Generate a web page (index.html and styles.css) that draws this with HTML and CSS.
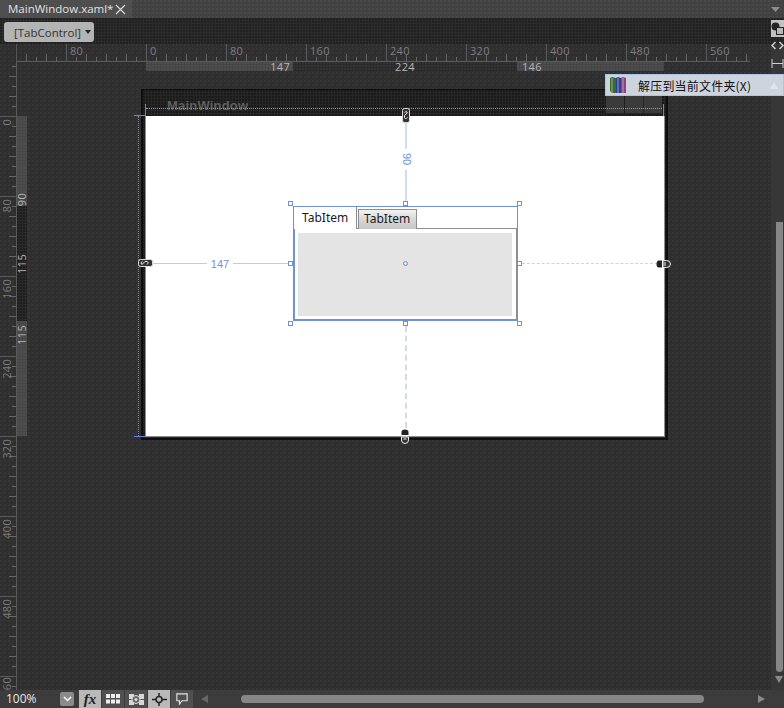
FILE: index.html
```html
<!DOCTYPE html>
<html lang="en">
  <head>
    <meta charset="UTF-8" />
    <title>MainWindow.xaml - Designer</title>
    <link rel="stylesheet" href="styles.css">
  </head>
  <body>
    <div class="app">
      <!-- document tabs -->
      <div class="tabbar">
        <div class="doc-tab">
          <span>MainWindow.xaml*</span>
          <svg class="doc-close" width="11" height="11" viewBox="0 0 11 11"><path d="M1 1l9 9M10 1l-9 9" stroke="#d8d8d8" stroke-width="1.2" fill="none"/></svg>
        </div>
        <svg class="tab-menu" width="9" height="5" viewBox="0 0 9 5"><path d="M0 0h9L4.500 5z" fill="#8c8c8c"/></svg>
      </div>

      <!-- breadcrumb -->
      <div class="crumbbar">
        <button class="crumb">[TabControl]<i class="crumb-arrow"></i></button>
        <div class="split-toggle">
          <svg width="13" height="13" viewBox="0 0 13 13"><circle cx="4.500" cy="4.500" r="4" fill="#222"/><rect x="5.500" y="5.500" width="7" height="7" fill="#b8b8b8" stroke="#222"/></svg>
        </div>
      </div>

      <div class="workspace">
        <div class="surface">
          <div class="ruler-top">
            <div class="ruler-top-track">
              <div class="hmark"></div>
              <div class="hmark"><span>80</span></div>
              <div class="hmark"><span>0</span></div>
              <div class="hmark"><span>80</span></div>
              <div class="hmark"><span>160</span></div>
              <div class="hmark"><span>240</span></div>
              <div class="hmark"><span>320</span></div>
              <div class="hmark"><span>400</span></div>
              <div class="hmark"><span>480</span></div>
              <div class="hmark"><span>560</span></div>
            </div>
          </div>

          <div class="ruler-left">
            <div class="ruler-left-track">
              <div class="vmark"></div>
              <div class="vmark"><span>0</span></div>
              <div class="vmark"><span>80</span></div>
              <div class="vmark"><span>160</span></div>
              <div class="vmark"><span>240</span></div>
              <div class="vmark"><span>320</span></div>
              <div class="vmark"><span>400</span></div>
              <div class="vmark"><span>480</span></div>
              <div class="vmark"><span>60</span></div>
            </div>
          </div>

          <div class="strip-left">
            <div class="vseg vseg-lit vseg-end"><span>90</span></div>
            <div class="vseg vseg-mid"><span>115</span></div>
            <div class="vseg vseg-lit vseg-start"><span>115</span></div>
          </div>

          <div class="strip-top">
            <div class="hseg hseg-lit hseg-end">147</div>
            <div class="hseg hseg-mid">224</div>
            <div class="hseg hseg-lit hseg-start">146</div>
          </div>

          <!-- design canvas -->
          <div class="canvas">
            <div class="window">
              <div class="win-head">
                <span class="win-title">MainWindow</span>
                <div class="win-btns"><i></i><i></i><i></i></div>
              </div>
              <i class="win-dotline"></i>
              <div class="win-content">
                <i class="tick tick-top-l"></i>
                <i class="tick tick-top-r"></i>
                <i class="tick tick-cross"></i>
                <i class="tick tick-side"></i>
                <i class="tick tick-foot"></i>

                <div class="guide guide-top"><span>90</span></div>
                <div class="guide guide-left"><span>147</span></div>
                <i class="guide guide-right"></i>
                <i class="guide guide-bottom"></i>

                <svg class="pin pin-top" width="8" height="15" viewBox="0 0 8 15"><rect x=".5" y=".5" width="7" height="14" rx="2" fill="#333" stroke="#ddd"/><path d="M2.500 4.500q1.500-2 3 0l-3 3q-.5 3 1 3t2-1" fill="none" stroke="#eee"/></svg>
                <svg class="pin pin-left" width="15" height="8" viewBox="0 0 15 8"><rect x=".5" y=".5" width="14" height="7" rx="2" fill="#333" stroke="#ddd"/><path d="M4 2.500q-2 1.500 0 3l3-3q3-.5 3 1t-1 2" fill="none" stroke="#eee"/></svg>
                <svg class="pin pin-right" width="15" height="8" viewBox="0 0 15 8"><path d="M5 .5H3Q.5.5.500 4T3 7.500h3V.5z" fill="#222"/><path d="M7.500.5h3q4 0 4 3.500t-4 3.500h-3" fill="#333" stroke="#eee"/><path d="M9 2v4" stroke="#eee"/></svg>
                <svg class="pin pin-bottom" width="8" height="15" viewBox="0 0 8 15"><path d="M.5 6V3Q.5.500 4 .5T7.500 3v3z" fill="#222"/><path d="M.5 8h7v3q0 3.500-3.500 3.500T.5 11z" fill="#333" stroke="#eee"/><path d="M2.500 10h3" stroke="#eee"/></svg>

                <div class="tabctl">
                  <div class="tabstrip">
                    <div class="tabitem tabitem-on">TabItem</div>
                    <div class="tabitem">TabItem</div>
                  </div>
                  <div class="tabpanel">
                    <div class="tabfill"></div>
                  </div>
                  <i class="tabcenter"></i>
                  <i class="handle h-tl"></i>
                  <i class="handle h-tm"></i>
                  <i class="handle h-tr"></i>
                  <i class="handle h-ml"></i>
                  <i class="handle h-mr"></i>
                  <i class="handle h-bl"></i>
                  <i class="handle h-bm"></i>
                  <i class="handle h-br"></i>
                </div>
              </div>
            </div>
          </div>
        </div>

        <!-- right column -->
        <div class="vscroll">
          <svg class="side-icon side-first" width="13" height="9" viewBox="0 0 13 9"><path d="M4.500 1L1 4.500 4.500 8M8.500 1L12 4.500 8.500 8" fill="none" stroke="#cfcfcf" stroke-width="1.500"/></svg>
          <svg class="side-icon" width="13" height="9" viewBox="0 0 13 9"><path d="M1 0v9M12 0v9M1 4.500h11" fill="none" stroke="#cfcfcf"/></svg>
          <div class="vthumb"></div>
          <svg class="varrow" width="8" height="7" viewBox="0 0 8 7"><path d="M0 0h8L4 7z" fill="#8a8a8a"/></svg>
        </div>
      </div>

      <!-- bottom bar -->
      <div class="statusbar">
        <div class="zoom-val">100%</div>
        <div class="zoom-drop">
          <svg width="9" height="6" viewBox="0 0 9 6"><path d="M1 1l3.500 3.500L8 1" fill="none" stroke="#fff" stroke-width="1.500"/></svg>
        </div>
        <div class="tools">
          <div class="tool tool-on"><span class="fx">fx</span></div>
          <div class="tool">
            <svg width="14" height="10" viewBox="0 0 14 10"><path d="M0 0h4v4H0zM5 0h4v4H5zM10 0h4v4h-4zM0 5.500h4v4H0zM5 5.500h4v4H5zM10 5.500h4v4h-4z" fill="#eee"/></svg>
          </div>
          <div class="tool">
            <svg width="15" height="11" viewBox="0 0 15 11"><path d="M0 0h5v5H0zM10 0h5v5h-5zM0 6h5v5H0zM10 6h5v5h-5z" fill="#d8d8d8"/><circle cx="7" cy="5.500" r="4" fill="#666" stroke="#ddd"/><circle cx="7" cy="5.500" r="1.500" fill="#ddd"/></svg>
          </div>
          <div class="tool tool-on">
            <svg width="15" height="13" viewBox="0 0 15 13"><path d="M0 6.500h15M7 0v13" stroke="#222" stroke-width="1.500"/><circle cx="7" cy="6.500" r="3" fill="#b9b9b9" stroke="#222" stroke-width="1.500"/></svg>
          </div>
          <div class="tool">
            <svg width="12" height="12" viewBox="0 0 14 14"><path d="M1 1h12v8H7l-3 4V9H1z" fill="none" stroke="#e4e4e4" stroke-width="1.300"/></svg>
          </div>
        </div>
        <div class="hscroll">
          <svg width="7" height="8" viewBox="0 0 7 8"><path d="M7 0v8L0 4z" fill="#666"/></svg>
          <div class="hthumb"></div>
          <svg width="7" height="8" viewBox="0 0 7 8"><path d="M0 0v8l7-4z" fill="#8a8a8a"/></svg>
        </div>
      </div>

      <!-- shell menu from another program, floats over the designer -->
      <div class="shell-item">
        <svg class="books" width="18" height="18" viewBox="0 0 18 18">
          <path d="M1 2l2-1 4 1v15l-4 0-2-2z" fill="#3d6a2b"/>
          <path d="M7 2l2-1 3 1v15H7z" fill="#2d3f92"/>
          <path d="M12 2l2-1 3 1v15h-5z" fill="#93407f"/>
          <path d="M3 2v15M9 2v15M14 2v15" stroke="#d9dde2" stroke-width=".6"/>
        </svg>
        <span>解压到当前文件夹(X)</span>
        <svg class="shell-ghost" width="8" height="7" viewBox="0 0 8 7"><path d="M4 0l4 7H0z" fill="#dfe4ea"/></svg>
      </div>
    </div>
  </body>
</html>
```

FILE: styles.css
```css
* {
  box-sizing: border-box;
}

body {
  margin: 0;
  background: #2f2f2f;
}

i {
  display: block;
}

.app {
  position: relative;
  width: 784px;
  height: 708px;
  overflow: hidden;
  display: grid;
  grid-template-rows: 18px 26px 1fr 18px;
  font-family: "Open Sans", "Noto Sans", sans-serif;
  font-size: 12px;
  color: #ddd;
  background-color: #2f2f2f;
  background-image:
    radial-gradient(circle at 1px 1px, #353535 1px, transparent 1px),
    radial-gradient(circle at 4px 4px, #353535 1.5px, transparent 1.5px);
  background-size: 4px 4px, 8px 8px;
}

/* Document tabs */
.tabbar {
  display: flex;
  align-items: center;
  justify-content: space-between;
  padding-right: 2px;
  background-color: #414141;
  background-image: radial-gradient(circle at 1px 1px, #484848 1px, transparent 1px);
  background-size: 4px 4px;
}

.doc-tab {
  width: 132px;
  height: 18px;
  display: flex;
  align-items: center;
  justify-content: space-between;
  padding: 0 6px 0 8px;
  font-size: 11.5px;
  line-height: 18px;
  color: #e2e2e2;
  background: #4e4e4e;
}

.doc-close {
  flex: none;
}

.tab-menu {
  margin-right: 2px;
}

/* Breadcrumb */
.crumbbar {
  display: flex;
  align-items: flex-start;
  justify-content: space-between;
  padding: 4px 0 0 4px;
  background-color: #2b2b2b;
  background-image: radial-gradient(circle at 1px 1px, #212121 1px, transparent 1px);
  background-size: 3px 3px;
}

.crumb {
  width: 90px;
  height: 20px;
  display: flex;
  align-items: center;
  gap: 4px;
  padding: 0 0 0 10px;
  border: 0;
  border-radius: 3px;
  font: inherit;
  font-size: 11.5px;
  color: #333;
  background: #b4b4b4;
}

.crumb-arrow {
  width: 0;
  height: 0;
  border: 3px solid transparent;
  border-top: 4px solid #222;
  border-bottom: 0;
}

.split-toggle {
  width: 13px;
  height: 17px;
  margin-top: -2px;
  display: flex;
  align-items: center;
  justify-content: center;
  background: #c2c2c2;
}

/* Design surface */
.workspace {
  display: grid;
  grid-template-columns: 1fr 13px;
  min-height: 0;
}

.surface {
  display: grid;
  grid-template-columns: 17px 10px 1fr;
  grid-template-rows: 18px 9px 1fr;
  min-height: 0;
}

.ruler-top {
  grid-column: 1 / 4;
  margin-left: 16px;
  margin-right: 21px;
  overflow: hidden;
  border-left: 1px solid #555;
  border-bottom: 1px solid #5a5a5a;
}

.ruler-top-track {
  display: flex;
  height: 100%;
  margin-left: -31px;
}

.hmark {
  flex: none;
  width: 80px;
  height: 100%;
  padding: 0 0 0 3px;
  border-left: 1px solid #5a5a5a;
  font-size: 11px;
  line-height: 13px;
  letter-spacing: 0.3px;
  color: #7d7d7d;
  background-image:
    repeating-linear-gradient(90deg, transparent 0 9px, #666 9px 10px),
    repeating-linear-gradient(90deg, transparent 0 19px, #666 19px 20px);
  background-size: 100% 4px, 100% 7px;
  background-position: bottom;
  background-repeat: no-repeat;
}

.ruler-left {
  grid-row: 2 / 4;
  overflow: hidden;
  border-right: 1px solid #5a5a5a;
}

.ruler-left-track {
  margin-top: -26px;
}

.vmark {
  height: 80px;
  padding: 2px 0 0 1px;
  border-top: 1px solid #5a5a5a;
  font-size: 11px;
  letter-spacing: 0.3px;
  color: #7d7d7d;
  background-image:
    repeating-linear-gradient(180deg, transparent 0 9px, #666 9px 10px),
    repeating-linear-gradient(180deg, transparent 0 19px, #666 19px 20px);
  background-size: 4px 100%, 7px 100%;
  background-position: right;
  background-repeat: no-repeat;
}

.vmark:last-child {
  padding-top: 0;
}

.vmark span,
.vseg span {
  display: block;
  width: 11px;
  line-height: 11px;
  writing-mode: vertical-rl;
  transform: rotate(180deg);
}

.strip-left {
  grid-column: 2;
  grid-row: 2 / 4;
  padding-top: 54px;
  font-size: 11px;
  letter-spacing: 0.3px;
  color: #b5b5b5;
}

.vseg {
  display: flex;
  flex-direction: column;
  align-items: center;
  justify-content: center;
  height: 115px;
  background-color: #2a2a2a;
  background-image: radial-gradient(circle at 1px 1px, #1d1d1d 1px, transparent 1px);
  background-size: 3px 3px;
}

.vseg span {
  width: 10px;
  line-height: 10px;
}

.vseg-lit {
  background-color: #474747;
  background-image: radial-gradient(circle at 1px 1px, #4e4e4e 1px, transparent 1px);
}

.vseg-end {
  height: 90px;
  justify-content: flex-end;
}

.vseg-start {
  justify-content: flex-start;
  padding-top: 4px;
}

.strip-top {
  grid-column: 3;
  grid-row: 2;
  display: flex;
  margin-left: 119px;
  font-size: 11px;
  line-height: 9px;
  letter-spacing: 0.3px;
  color: #b5b5b5;
}

.hseg {
  text-align: center;
  width: 224px;
  background-color: #2a2a2a;
  background-image: radial-gradient(circle at 1px 1px, #333 1px, transparent 1px);
  background-size: 3px 3px;
}

.hseg-lit {
  width: 147px;
  background-color: #464646;
  background-image: radial-gradient(circle at 1px 1px, #4e4e4e 1px, transparent 1px);
}

.hseg-end {
  padding-right: 3px;
  text-align: right;
}

.hseg-start {
  padding-left: 5px;
  text-align: left;
}

.canvas {
  grid-column: 3;
  grid-row: 3;
  position: relative;
}

/* Window being designed */
.window {
  position: absolute;
  left: 114px;
  top: 18px;
  width: 527px;
  height: 351px;
  display: flex;
  flex-direction: column;
  padding: 0 1px 1px 2px;
  border: 2px solid #0e0e0e;
  border-top-width: 1px;
  background-color: #262626;
  background-image: radial-gradient(circle at 1px 1px, #1a1a1a 1px, transparent 1px);
  background-size: 3px 3px;
}

.win-head {
  flex: none;
  height: 26px;
  display: flex;
  justify-content: space-between;
  padding: 6px 3px 0 22px;
}

.win-title {
  margin-top: 2px;
  font-family: "Liberation Sans", sans-serif;
  font-size: 13px;
  font-weight: bold;
  line-height: 15px;
  letter-spacing: 0.2px;
  color: #5f5f5f;
}

.win-btns {
  display: flex;
  gap: 1px;
}

.win-btns i {
  width: 18px;
  height: 17px;
  background: #3b3b3b;
}

.win-dotline {
  position: absolute;
  left: 3px;
  top: 18px;
  width: 518px;
  border-top: 1px dotted #7c9de6;
}

.win-content {
  position: relative;
  flex: 1;
  border: 1px solid #8c8c8c;
  border-top: 0;
  background: #fff;
}

.tick {
  position: absolute;
  background: #5f86e0;
}

.tick-top-l {
  left: -1px;
  top: -12px;
  width: 1px;
  height: 12px;
}

.tick-top-r {
  right: 0;
  top: -12px;
  width: 1px;
  height: 12px;
}

.tick-cross {
  left: -12px;
  top: -1px;
  width: 12px;
  height: 1px;
}

.tick-side {
  left: -8px;
  top: 0;
  width: 0;
  height: 320px;
  border-left: 1px dotted #5f86e0;
  background: none;
}

.tick-foot {
  left: -12px;
  top: 320px;
  width: 12px;
  height: 1px;
}

/* Margin guides */
.guide {
  position: absolute;
  font-family: "Liberation Sans", sans-serif;
  font-size: 11px;
  color: #6f90e8;
}

.guide-top {
  left: 259px;
  top: 0;
  width: 2px;
  height: 87px;
  display: flex;
  align-items: center;
  justify-content: center;
  background: #cfdcf6;
}

.guide-top span {
  flex: none;
  padding: 4px 0;
  line-height: 11px;
  writing-mode: vertical-rl;
  background: #fff;
}

.guide-left {
  left: 4px;
  top: 147px;
  width: 140px;
  height: 1px;
  display: flex;
  align-items: center;
  justify-content: center;
  background: #b8cbf0;
}

.guide-left span {
  padding: 0 4px;
  background: #fff;
}

.guide-right {
  left: 376px;
  top: 147px;
  width: 136px;
  border-top: 1px dashed #c8d4ee;
}

.guide-bottom {
  left: 259px;
  top: 210px;
  height: 102px;
  border-left: 2px dashed #d6dbea;
}

.pin {
  position: absolute;
  z-index: 2;
}

.pin-top {
  left: 256px;
  top: -8px;
}

.pin-left {
  left: -8px;
  top: 143px;
}

.pin-right {
  left: 510px;
  top: 144px;
}

.pin-bottom {
  left: 255px;
  top: 313px;
}

/* TabControl */
.tabctl {
  position: absolute;
  left: 147px;
  top: 90px;
  width: 225px;
  height: 115px;
  display: flex;
  flex-direction: column;
  border: 1px solid #6f90dc;
  background: #fff;
}

.tabstrip {
  flex: none;
  position: relative;
  z-index: 1;
  display: flex;
  align-items: flex-start;
  height: 21px;
  font-family: "Noto Sans", sans-serif;
  font-size: 12px;
  color: #1a1a1a;
}

.tabitem {
  width: 59px;
  height: 20px;
  margin-top: 2px;
  margin-left: 1px;
  padding-left: 5px;
  line-height: 17px;
  border: 1px solid #8c8e94;
  border-bottom: 0;
  background: linear-gradient(#f3f1f1, #d8d8d8 50%, #c6c6c6);
}

.tabitem-on {
  width: 63px;
  height: 22px;
  margin: 0;
  padding-left: 8px;
  line-height: 21px;
  border: 0;
  border-right: 1px solid #8c8e94;
  background: #fff;
}

.tabpanel {
  flex: 1;
  display: flex;
  padding: 4px 4px 3px 3px;
  border: 1px solid #8c8e94;
  border-left: 1px solid #6f90dc;
}

.tabfill {
  flex: 1;
  background: #e4e4e4;
}

.tabcenter {
  position: absolute;
  left: 109px;
  top: 54px;
  width: 5px;
  height: 5px;
  border: 1px solid #6f90dc;
  border-radius: 50%;
}

.handle {
  position: absolute;
  z-index: 2;
  width: 5px;
  height: 5px;
  border: 1px solid #6f90dc;
  background: #fff;
}

.h-tl, .h-tm, .h-tr { top: -6px; }
.h-ml, .h-mr { top: 54px; }
.h-bl, .h-bm, .h-br { top: 114px; }
.h-tl, .h-ml, .h-bl { left: -6px; }
.h-tm, .h-bm { left: 109px; }
.h-tr, .h-mr, .h-br { left: 223px; }

/* Right column */
.vscroll {
  display: flex;
  flex-direction: column;
  align-items: center;
  background: #373737;
}

.side-icon {
  flex: none;
  margin-bottom: 9px;
}

.side-first {
  margin-top: -3px;
}

.vthumb {
  flex: none;
  width: 7px;
  height: 450px;
  margin: 145px 0 0 3px;
  border-radius: 0 0 4px 4px;
  background: #868686;
}

.varrow {
  flex: none;
  margin: 4px 0 0 3px;
}

/* Bottom bar */
.statusbar {
  display: flex;
  align-items: center;
  background: #3c3c3c;
}

.zoom-val {
  width: 58px;
  padding-left: 6px;
  font-size: 12px;
  line-height: 14px;
  color: #e6e6e6;
}

.zoom-drop {
  width: 14px;
  height: 14px;
  margin: 0 5px 0 2px;
  display: flex;
  align-items: center;
  justify-content: center;
  border-radius: 2px;
  background: #8b8b8b;
}

.tools {
  display: flex;
  height: 100%;
  gap: 1px;
}

.tool {
  width: 22px;
  height: 100%;
  display: flex;
  align-items: center;
  justify-content: center;
  background: #505050;
}

.tool-on {
  background: #b9b9b9;
}

.fx {
  font-family: "Liberation Serif", serif;
  font-size: 15px;
  font-style: italic;
  font-weight: bold;
  color: #222;
}

.hscroll {
  flex: 1;
  display: flex;
  align-items: center;
  padding: 0 18px 0 8px;
}

.hthumb {
  width: 463px;
  height: 8px;
  margin: 0 54px 0 33px;
  border-radius: 4px;
  background: #868686;
}

/* Floating shell menu item */
.shell-item {
  position: absolute;
  left: 605px;
  top: 74px;
  right: 0;
  height: 22px;
  display: flex;
  align-items: center;
  gap: 11px;
  padding: 0 5px 0 3px;
  font-family: "Noto Sans CJK SC", sans-serif;
  font-size: 12px;
  letter-spacing: 0.2px;
  color: #111;
  border: 1px solid #a9c6e6;
  background: #cdd4dd;
}

.shell-ghost {
  margin-left: auto;
}
```
